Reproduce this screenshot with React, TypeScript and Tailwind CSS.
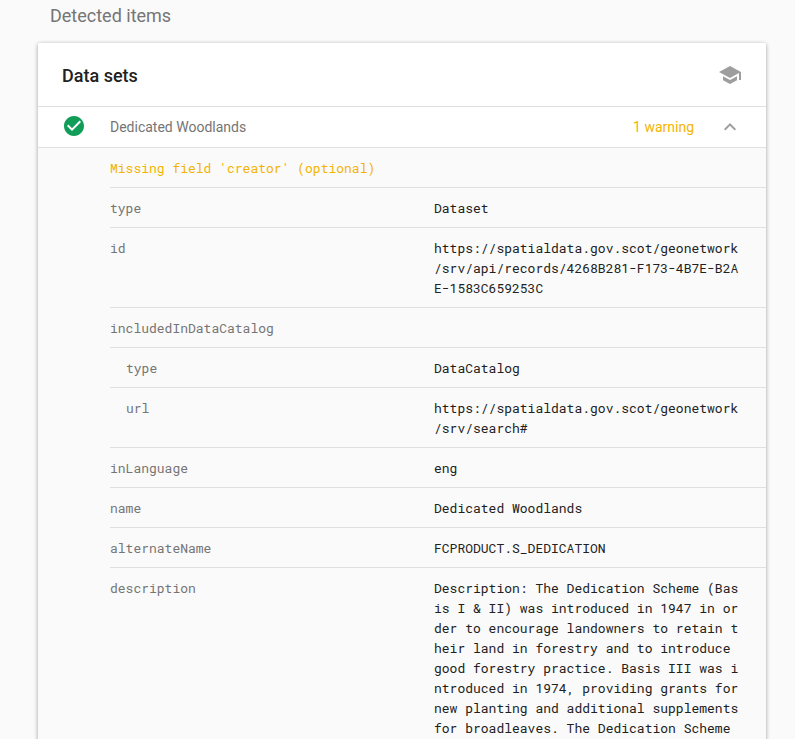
import React from "react";

type Row = { label: string; lines: string[]; nested?: boolean };

const rows: Row[] = [
  { label: "type", lines: ["Dataset"] },
  {
    label: "id",
    lines: [
      "https://spatialdata.gov.scot/geonetwork",
      "/srv/api/records/4268B281-F173-4B7E-B2A",
      "E-1583C659253C",
    ],
  },
  { label: "includedInDataCatalog", lines: [] },
  { label: "type", lines: ["DataCatalog"], nested: true },
  {
    label: "url",
    lines: ["https://spatialdata.gov.scot/geonetwork", "/srv/search#"],
    nested: true,
  },
  { label: "inLanguage", lines: ["eng"] },
  { label: "name", lines: ["Dedicated Woodlands"] },
  { label: "alternateName", lines: ["FCPRODUCT.S_DEDICATION"] },
  {
    label: "description",
    lines: [
      "Description: The Dedication Scheme (Bas",
      "is I & II) was introduced in 1947 in or",
      "der to encourage landowners to retain t",
      "heir land in forestry and to introduce",
      "good forestry practice. Basis III was i",
      "ntroduced in 1974, providing grants for",
      "new planting and additional supplements",
      "for broadleaves. The Dedication Scheme",
    ],
  },
];

function PropertyRow({ label, lines, nested }: Row) {
  return (
    <div className="flex border-b border-[#e0e0e0] pt-[10px] pb-[9px]">
      <div className={nested ? "w-[324px] shrink-0 pl-4 text-[#757575]" : "w-[324px] shrink-0 text-[#757575]"}>
        {label}
      </div>
      <div className="whitespace-pre text-[#212121]">
        {lines.map((line) => (
          <div key={line}>{line}</div>
        ))}
      </div>
    </div>
  );
}

export default function App() {
  return (
    <div className="h-[739px] w-full overflow-hidden bg-[#fafafa] font-[Roboto,sans-serif]">
      <h2 className="pt-1 pl-[50px] text-[18px] leading-6 font-normal text-[#757575]">Detected items</h2>
      <section className="mt-[15px] ml-[38px] w-[728px] overflow-hidden rounded-[2px] bg-[#fafafa] shadow-[0_1px_4px_rgba(0,0,0,0.37)]">
        <header className="flex h-16 items-center justify-between border-b border-[#e0e0e0] bg-white pr-6 pl-6">
          <h3 className="pt-[3px] text-[18px] leading-6 font-medium text-[#212121]">Data sets</h3>
          <svg viewBox="0 0 24 24" className="size-6 fill-[#9e9e9e]">
            <path d="M5 13.18v4L12 21l7-3.82v-4L12 17l-7-3.82zM12 3L1 9l11 6 9-4.91V17h2V9L12 3z" />
          </svg>
        </header>
        <div className="flex h-[41px] items-center border-b border-[#e0e0e0] bg-white pr-6 pl-6 text-[14px] leading-5">
          <svg viewBox="0 0 24 24" className="mb-0.5 size-6 fill-[#0f9d58]">
            <path d="M12 2C6.48 2 2 6.48 2 12s4.48 10 10 10 10-4.48 10-10S17.52 2 12 2zm-2 15l-5-5 1.41-1.41L10 14.17l7.59-7.59L19 8l-9 9z" />
          </svg>
          <span className="ml-6 flex-1 text-[#757575]">Dedicated Woodlands</span>
          <span className="mr-6 text-[#f4b400]">1 warning</span>
          <svg viewBox="0 0 24 24" className="size-6 fill-[#9e9e9e]">
            <path d="M12 8l-6 6 1.41 1.41L12 10.83l4.59 4.58L18 14z" />
          </svg>
        </div>
        <div className="pl-[72px] font-['Roboto_Mono','Liberation_Mono',monospace] text-[13px] leading-5">
          <div className="border-b border-[#e0e0e0] pt-[10px] pb-[9px] text-[#f4b400]">
            Missing field 'creator' (optional)
          </div>
          {rows.map((row, i) => (
            <PropertyRow key={i} {...row} />
          ))}
        </div>
      </section>
    </div>
  );
}
